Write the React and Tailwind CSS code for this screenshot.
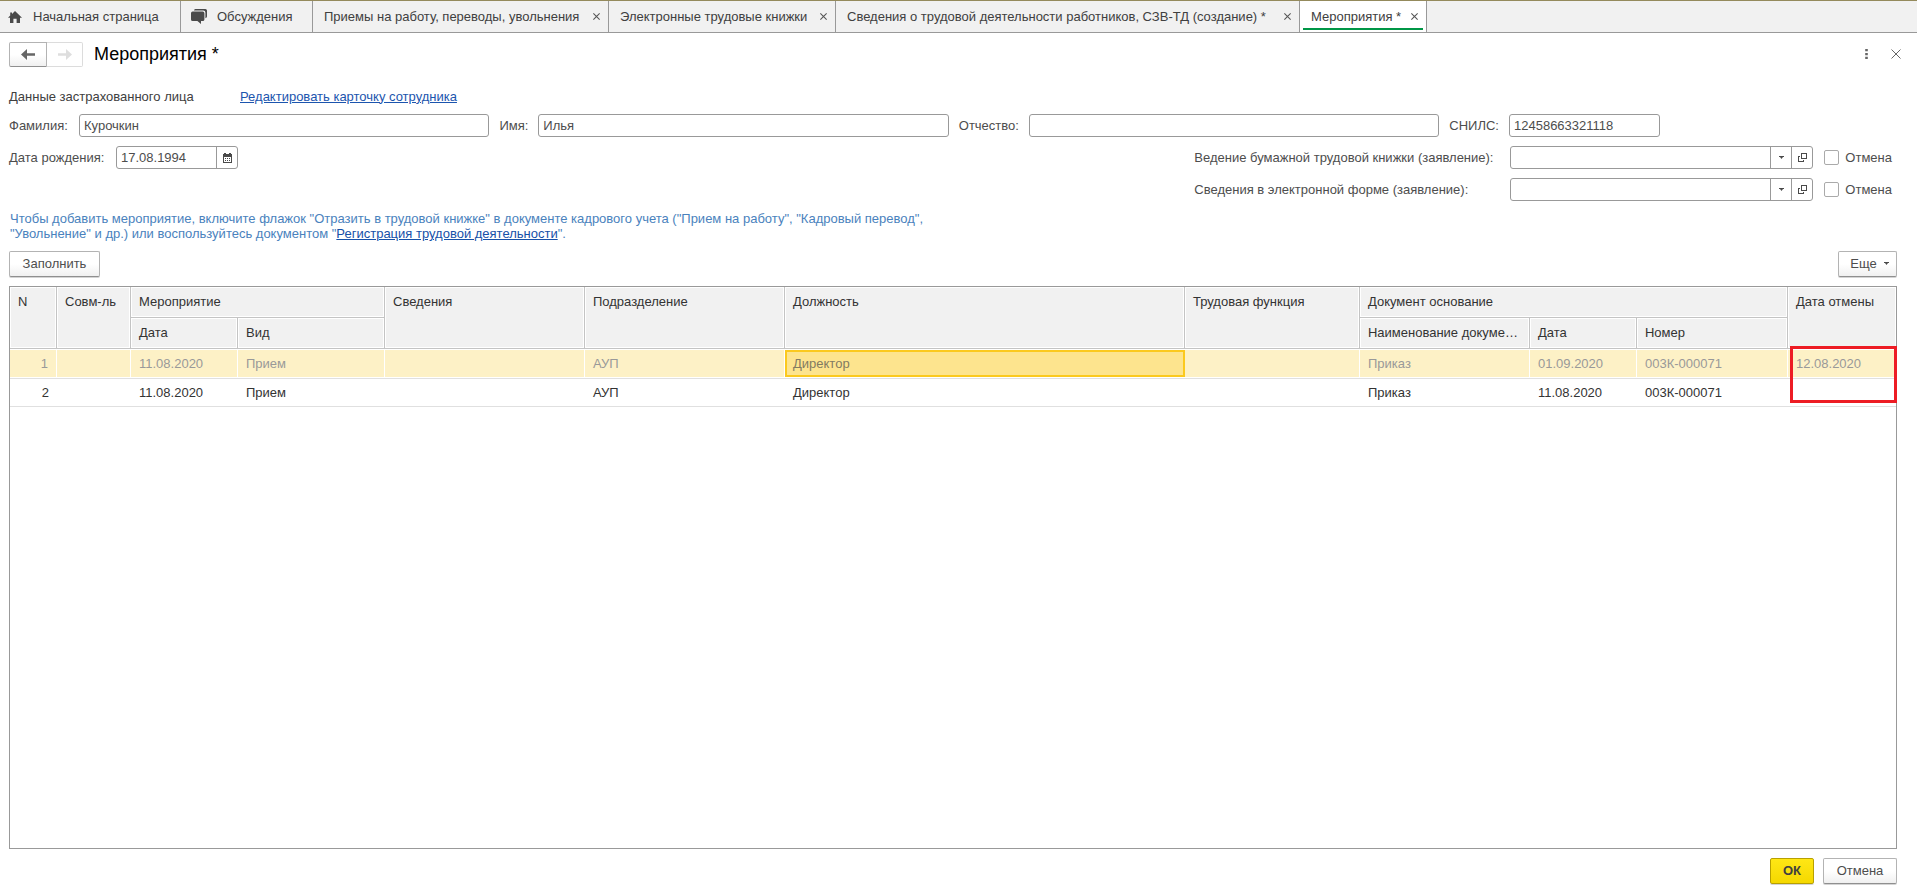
import { useState } from "react";

const GrayButton =
  "flex h-[26px] items-center justify-center rounded-[2px] border border-[#b3b3b3] border-b-[#8f8f8f] bg-gradient-to-b from-white from-50% to-[#f0f0f0] pb-px text-[#4d4d4d] shadow-[0_1px_0_#d4d4d4]";

function HomeIcon() {
  return (
    <svg width="14" height="12" viewBox="0 0 14 12" fill="#4a4a4a" aria-hidden="true">
      <path d="M7 0L14 6.8H12V12H8.6V7.8H5.4V12H2V6.8H0L2.2 4.6V1.4H4V2.9Z" />
    </svg>
  );
}

function ChatIcon() {
  return (
    <svg width="16" height="15" viewBox="0 0 16 15" fill="#4a4a4a" aria-hidden="true">
      <path d="M4.4 0H14.4Q16 0 16 1.6V7.6Q16 9 14.4 9.2V3.6Q14.4 1.6 12.4 1.6H3Q3 0 4.4 0Z" />
      <path d="M1.6 2.6H11.8Q13.4 2.6 13.4 4.2V10.4Q13.4 12 11.8 12H10V15L6.4 12H1.6Q0 12 0 10.4V4.2Q0 2.6 1.6 2.6Z" />
    </svg>
  );
}

function Arrow({ left, color }) {
  return (
    <svg width="14" height="11" viewBox="0 0 14 11" fill={color} aria-hidden="true">
      {left ? (
        <path d="M0 5.5L6 0V4.3H14V6.7H6V11Z" />
      ) : (
        <path d="M14 5.5L8 0V4.3H0V6.7H8V11Z" />
      )}
    </svg>
  );
}

function Cross({ size, color, width }) {
  return (
    <svg width={size} height={size} viewBox="0 0 10 10" stroke={color} strokeWidth={width} aria-hidden="true">
      <path d="M0.5 0.5L9.5 9.5M9.5 0.5L0.5 9.5" />
    </svg>
  );
}

function Caret() {
  return (
    <svg width="5" height="3" viewBox="0 0 5 3" fill="#4a4a4a" aria-hidden="true">
      <path d="M0 0H5V1H4L2.5 3L1 1H0Z" />
    </svg>
  );
}

function OpenIcon() {
  return (
    <svg width="9" height="9" viewBox="0 0 9 9" fill="none" stroke="#4a4a4a" shapeRendering="crispEdges" aria-hidden="true">
      <path d="M3.5 0.5H8.5V5.5H3.5ZM2 3.5H0.5V8.5H5.5V7" />
    </svg>
  );
}

function CalendarIcon() {
  return (
    <svg width="9" height="10" viewBox="0 0 9 10" fill="#4a4a4a" shapeRendering="crispEdges" aria-hidden="true">
      <path d="M0 1H1V0H3V1H6V0H8V1H9V10H0ZM1 4V9H8V4Z" fillRule="evenodd" />
      <path d="M2 5H3V6H2ZM4 5H5V6H4ZM6 5H7V6H6ZM2 7H3V8H2ZM4 7H5V8H4ZM6 7H7V8H6Z" />
    </svg>
  );
}

function Tab({ title, active, className }) {
  return (
    <div className={`flex items-center justify-between border-r border-[#999] pr-2 pl-[11px] ${active ? "relative bg-white" : ""} ${className}`}>
      <button type="button" className="whitespace-nowrap">{title}</button>
      <button type="button" aria-label="Закрыть вкладку">
        <Cross size={7} color="#555" width={1.5} />
      </button>
      {active && <span className="absolute inset-x-[3px] bottom-[2px] h-[2px] bg-[#009646]" />}
    </div>
  );
}

const inputClass = "h-[23px] rounded-[3px] border border-[#999] bg-white px-1 text-[#4d4d4d] outline-none";

function TextField({ id, label, value, className, labelClass = "" }) {
  return (
    <>
      <label htmlFor={id} className={labelClass}>{label}</label>
      <input id={id} type="text" defaultValue={value} className={`${inputClass} ${className}`} />
    </>
  );
}

function StatementRow({ id, label }) {
  return (
    <div className="flex items-center">
      <label htmlFor={id} className="w-[316px] whitespace-nowrap">{label}</label>
      <div className="flex h-[23px] w-[303px] rounded-[3px] border border-[#999]">
        <input id={id} type="text" className="min-w-0 flex-1 bg-transparent px-1 outline-none" />
        <button type="button" aria-label="Выбрать" className="flex w-[21px] items-center justify-center border-l border-[#999]">
          <Caret />
        </button>
        <button type="button" aria-label="Открыть" className="flex w-[21px] items-center justify-center border-l border-[#999]">
          <OpenIcon />
        </button>
      </div>
      <label className="ml-[11px] flex items-center gap-[6px] pr-[5px]">
        <input type="checkbox" className="size-[15px] appearance-none rounded-[2px] border border-[#aaa] bg-white checked:bg-[#4a4a4a]" />
        Отмена
      </label>
    </div>
  );
}

function Th({ children, line = true, ...rest }) {
  return (
    <th
      {...rest}
      className={`truncate border-b border-[#c4c4c4] bg-[#f1f1f1] px-2 pt-[7px] text-left align-top font-normal shadow-[inset_0_0_0_1px_white] ${line ? "border-r" : ""}`}
    >
      {children}
    </th>
  );
}

const rows = [
  ["1", "", "11.08.2020", "Прием", "", "АУП", "Директор", "", "Приказ", "01.09.2020", "003К-000071", "12.08.2020"],
  ["2", "", "11.08.2020", "Прием", "", "АУП", "Директор", "", "Приказ", "11.08.2020", "003К-000071", ""],
];

function EventsTable() {
  const [selected, setSelected] = useState(0);
  return (
    <table className="w-full table-fixed border-separate border-spacing-0 text-[#333]">
      <colgroup>
        <col className="w-[47px]" />
        <col className="w-[74px]" />
        <col className="w-[107px]" />
        <col className="w-[147px]" />
        <col className="w-[200px]" />
        <col className="w-[200px]" />
        <col />
        <col className="w-[175px]" />
        <col className="w-[170px]" />
        <col className="w-[107px]" />
        <col className="w-[151px]" />
        <col className="w-[108px]" />
      </colgroup>
      <thead>
        <tr className="h-[31px]">
          <Th rowSpan={2}>N</Th>
          <Th rowSpan={2}>Совм-ль</Th>
          <Th colSpan={2}>Мероприятие</Th>
          <Th rowSpan={2}>Сведения</Th>
          <Th rowSpan={2}>Подразделение</Th>
          <Th rowSpan={2}>Должность</Th>
          <Th rowSpan={2}>Трудовая функция</Th>
          <Th colSpan={3}>Документ основание</Th>
          <Th rowSpan={2} line={false}>Дата отмены</Th>
        </tr>
        <tr className="h-[31px]">
          <Th>Дата</Th>
          <Th>Вид</Th>
          <Th>Наименование документа</Th>
          <Th>Дата</Th>
          <Th>Номер</Th>
        </tr>
      </thead>
      <tbody>
        {rows.map((row, r) => (
          <tr key={row[0]} onClick={() => setSelected(r)} className={r === selected ? "h-[30px] text-[#999]" : "h-7"}>
            {row.map((text, c) => {
              const current = r === selected && c === 6;
              return (
                <td key={c} className="relative border-b border-[#e0e0e0] p-0">
                  <div
                    className={`flex items-center ${c === 0 ? "justify-end" : ""} ${
                      current
                        ? "my-px h-[27px] border-2 border-[#fbc91e] bg-[#fde48e] px-[6px] text-[#827b62]"
                        : r === selected
                          ? "my-px h-[27px] border-r border-white bg-[#fdf1c6] px-2"
                          : "h-[27px] px-2"
                    }`}
                  >
                    {text}
                  </div>
                  {r === 0 && c === 11 && (
                    <span className="pointer-events-none absolute -top-[3px] -right-px left-[2px] z-10 h-[57px] border-3 border-[#ed1c24]" />
                  )}
                </td>
              );
            })}
          </tr>
        ))}
      </tbody>
    </table>
  );
}

export default function App() {
  return (
    <div className="flex min-h-screen flex-col bg-white font-['Liberation_Sans',Arial,sans-serif] text-[13px] leading-[15px] text-[#4d4d4d]">
      <nav className="flex h-[33px] border-t border-b border-t-[#948a5c] border-b-[#999] bg-[#f1f1f1] text-[#404040]">
        <button type="button" className="flex w-[181px] items-center gap-[11px] border-r border-[#999] pl-2 whitespace-nowrap">
          <HomeIcon />
          Начальная страница
        </button>
        <button type="button" className="flex w-[132px] items-center gap-[10px] border-r border-[#999] pl-[10px] whitespace-nowrap">
          <ChatIcon />
          Обсуждения
        </button>
        <Tab title="Приемы на работу, переводы, увольнения" className="w-[296px]" />
        <Tab title="Электронные трудовые книжки" className="w-[227px]" />
        <Tab title="Сведения о трудовой деятельности работников, СЗВ-ТД (создание) *" className="w-[464px]" />
        <Tab title="Мероприятия *" active className="w-[127px]" />
      </nav>

      <main className="flex flex-1 flex-col pt-[9px] pr-5 pb-[7px] pl-[9px]">
        <header className="-mr-[14px] flex h-[25px] items-center">
          <button type="button" aria-label="Назад" className="flex h-[25px] w-[38px] items-center justify-center rounded-l-[2px] border border-[#b3b3b3] border-b-[#8f8f8f] bg-gradient-to-b from-white from-50% to-[#f0f0f0]">
            <Arrow left color="#666" />
          </button>
          <button type="button" aria-label="Вперед" disabled className="flex h-[25px] w-9 items-center justify-center rounded-r-[2px] border border-l-0 border-[#dcdcdc] bg-white">
            <Arrow color="#dedede" />
          </button>
          <h1 className="ml-[11px] pb-[2px] text-[18px] leading-5 text-black">Мероприятия *</h1>
          <div className="ml-auto flex items-center pb-[2px]">
            <button type="button" aria-label="Еще действия" className="flex w-[30px] justify-center">
              <svg width="3" height="10" viewBox="0 0 3 10" fill="#666" aria-hidden="true">
                <path d="M0.2 0H2.8V2.3H0.2ZM0.2 3.9H2.8V6.2H0.2ZM0.2 7.7H2.8V10H0.2Z" />
              </svg>
            </button>
            <button type="button" aria-label="Закрыть" className="flex w-[30px] justify-center">
              <Cross size={10} color="#666" width={1} />
            </button>
          </div>
        </header>

        <div className="mt-[19px] flex h-5 items-center">
          <h2 className="w-[231px] text-[#404040]">Данные застрахованного лица</h2>
          <a href="#card" className="text-[#1c55ae] underline">Редактировать карточку сотрудника</a>
        </div>

        <div className="mt-2 flex items-center gap-[10px] pr-[237px]">
          <TextField id="surname" label="Фамилия:" value="Курочкин" labelClass="w-[60px]" className="min-w-0 flex-1" />
          <TextField id="name" label="Имя:" value="Илья" className="min-w-0 flex-1" />
          <TextField id="patronymic" label="Отчество:" value="" className="min-w-0 flex-1" />
          <TextField id="snils" label="СНИЛС:" value="12458663321118" className="w-[151px]" />
        </div>

        <div className="mt-[9px] flex items-start justify-between">
          <div className="flex items-center">
            <label htmlFor="birth" className="w-[107px]">Дата рождения:</label>
            <div className="flex h-[23px] w-[122px] rounded-[3px] border border-[#999]">
              <input id="birth" type="text" defaultValue="17.08.1994" className="min-w-0 flex-1 bg-transparent px-1 outline-none" />
              <button type="button" aria-label="Календарь" className="flex w-[21px] items-center justify-center border-l border-[#999]">
                <CalendarIcon />
              </button>
            </div>
          </div>
          <div className="flex flex-col gap-[9px]">
            <StatementRow id="paper" label="Ведение бумажной трудовой книжки (заявление):" />
            <StatementRow id="electronic" label="Сведения в электронной форме (заявление):" />
          </div>
        </div>

        <p className="mt-[10px] pl-px text-[#4a82bd]">
          Чтобы добавить мероприятие, включите флажок "Отразить в трудовой книжке" в документе кадрового учета ("Прием на работу", "Кадровый перевод",
          <br />
          "Увольнение" и др.) или воспользуйтесь документом "
          <a href="#registration" className="text-[#1650a8] underline">Регистрация трудовой деятельности</a>".
        </p>

        <div className="mt-[10px] flex justify-between">
          <button type="button" className={`${GrayButton} w-[91px]`}>Заполнить</button>
          <button type="button" className={`${GrayButton} w-[59px] gap-[7px] pl-1`}>
            Еще
            <Caret />
          </button>
        </div>

        <section className="mt-[9px] flex-1 border border-[#999]">
          <EventsTable />
        </section>

        <footer className="mt-[9px] flex justify-end gap-[9px]">
          <button type="button" className="h-[26px] w-11 rounded-[2px] border border-[#b8a000] bg-gradient-to-b from-[#ffe714] to-[#f5d800] pb-px font-bold text-[#404040] shadow-[0_1px_0_#d4d4d4]">
            ОК
          </button>
          <button type="button" className={`${GrayButton} w-[74px]`}>Отмена</button>
        </footer>
      </main>
    </div>
  );
}
